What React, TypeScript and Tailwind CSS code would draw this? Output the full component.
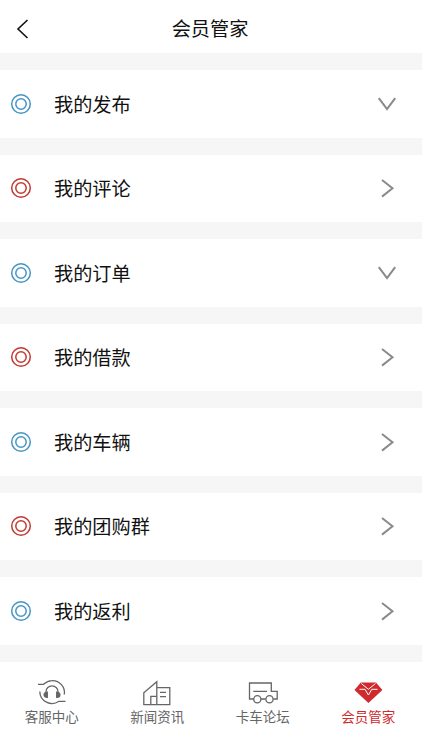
import type { ReactNode } from 'react';
import { clsx } from 'clsx';

interface MenuItem {
  label: string;
  tone: 'blue' | 'red';
  expandable?: boolean;
}

const MENU: MenuItem[] = [
  { label: '我的发布', tone: 'blue', expandable: true },
  { label: '我的评论', tone: 'red' },
  { label: '我的订单', tone: 'blue', expandable: true },
  { label: '我的借款', tone: 'red' },
  { label: '我的车辆', tone: 'blue' },
  { label: '我的团购群', tone: 'red' },
  { label: '我的返利', tone: 'blue' },
];

function RingIcon({ tone }: { tone: MenuItem['tone'] }) {
  return (
    <svg
      viewBox="0 0 22 22"
      className={clsx('w-[22px] h-[22px] shrink-0', tone === 'blue' ? 'text-[#4596c4]' : 'text-[#c23a31]')}
      fill="none"
      stroke="currentColor"
      strokeWidth="1.5"
    >
      <circle cx="11" cy="11" r="9.3" />
      <circle cx="11" cy="11" r="5.2" />
    </svg>
  );
}

function Chevron({ down }: { down?: boolean }) {
  return (
    <svg viewBox="0 0 20 20" className="w-5 h-5 shrink-0 text-[#8a8a8a]" fill="none" stroke="currentColor" strokeWidth="2">
      <path d={down ? 'M1.8 4.2 10 15.2 18.2 4.2' : 'M5 2 15.5 10.3 5 18.6'} />
    </svg>
  );
}

function MenuRow({ item }: { item: MenuItem }) {
  return (
    <button className="flex items-center w-full h-[67.5px] pl-2.5 pr-[25px] bg-white text-left">
      <RingIcon tone={item.tone} />
      <span className="flex-1 ml-[22px] text-[19.2px] leading-7 text-[#111]">{item.label}</span>
      <Chevron down={item.expandable} />
    </button>
  );
}

function TabIcon({ children }: { children: ReactNode }) {
  return (
    <svg viewBox="0 0 32 28" className="w-8 h-7" fill="none" stroke="currentColor" strokeWidth="1.3">
      {children}
    </svg>
  );
}

const TABS = [
  {
    label: '客服中心',
    icon: (
      <TabIcon>
        <path d="M2 5.3H7.5C10.5 2.6 13 1.6 16 1.6A12 12 0 0 1 28.3 15.5" />
        <path d="M3.8 12.5A12.2 12.2 0 0 0 23 22.3H29.5" />
        <path d="M10 14V12.8A6 6 0 0 1 22 12.8V14" />
        <path d="M11.3 13.2V18.4C7 18.4 7 13.2 11.3 13.2ZM20.7 13.2V18.4C25 18.4 25 13.2 20.7 13.2Z" fill="currentColor" />
      </TabIcon>
    ),
  },
  {
    label: '新闻资讯',
    icon: (
      <TabIcon>
        <path d="M15.8 25.7V2.7L2.8 13.7V25.7H28.8V8.7H15.8" />
        <path d="M9.8 25.7V17.3H15.8M19 13.4H25M19 17.7H25" />
      </TabIcon>
    ),
  },
  {
    label: '卡车论坛',
    icon: (
      <TabIcon>
        <path d="M6.7 20H2.5V4H24.3V12.3H30.2V20H26.2M13.9 20H18.7M6.3 12.3H20" />
        <circle cx="10.3" cy="20.2" r="3.6" />
        <circle cx="22.5" cy="20.2" r="3.6" />
      </TabIcon>
    ),
  },
  {
    label: '会员管家',
    active: true,
    icon: (
      <TabIcon>
        <path d="M8.8 3.5H24L30.4 11 16.4 24 2.5 11Z" fill="currentColor" stroke="none" />
        <path d="M9.3 4.5 16.4 10.3 23.5 4.5M7.5 10.3H13L16.4 16 19.8 10.3H25.5" stroke="#fff" strokeWidth="1" />
      </TabIcon>
    ),
  },
];

export default function App() {
  return (
    <div className="flex flex-col w-[422px] h-[750px] overflow-hidden bg-[#f6f6f6] font-['Noto_Sans_CJK_SC',sans-serif]">
      <header className="grid grid-cols-[59px_1fr_61px] items-center h-[53px] pt-[3px] shrink-0 bg-white">
        <button aria-label="返回" className="pl-4 pt-px">
          <svg viewBox="0 0 14 22" className="w-3.5 h-[22px] text-[#111]" fill="none" stroke="currentColor" strokeWidth="1.6">
            <path d="M11.5 2 2 11 11.5 20" />
          </svg>
        </button>
        <h1 className="text-center text-[19.2px] leading-7 text-[#111]">会员管家</h1>
      </header>

      <main className="flex flex-col gap-[17px] py-[17px] shrink-0">
        {MENU.map((item) => (
          <MenuRow key={item.label} item={item} />
        ))}
      </main>

      <nav className="flex-1 bg-white pt-[17px]">
        <div className="grid grid-cols-4 -ml-px mr-px">
          {TABS.map((tab) => (
            <button
              key={tab.label}
              className={clsx('flex flex-col items-center', tab.active ? 'text-[#cf2a2e]' : 'text-[#666]')}
            >
              {tab.icon}
              <span className="-mt-px text-[13.5px] leading-5">{tab.label}</span>
            </button>
          ))}
        </div>
      </nav>
    </div>
  );
}
